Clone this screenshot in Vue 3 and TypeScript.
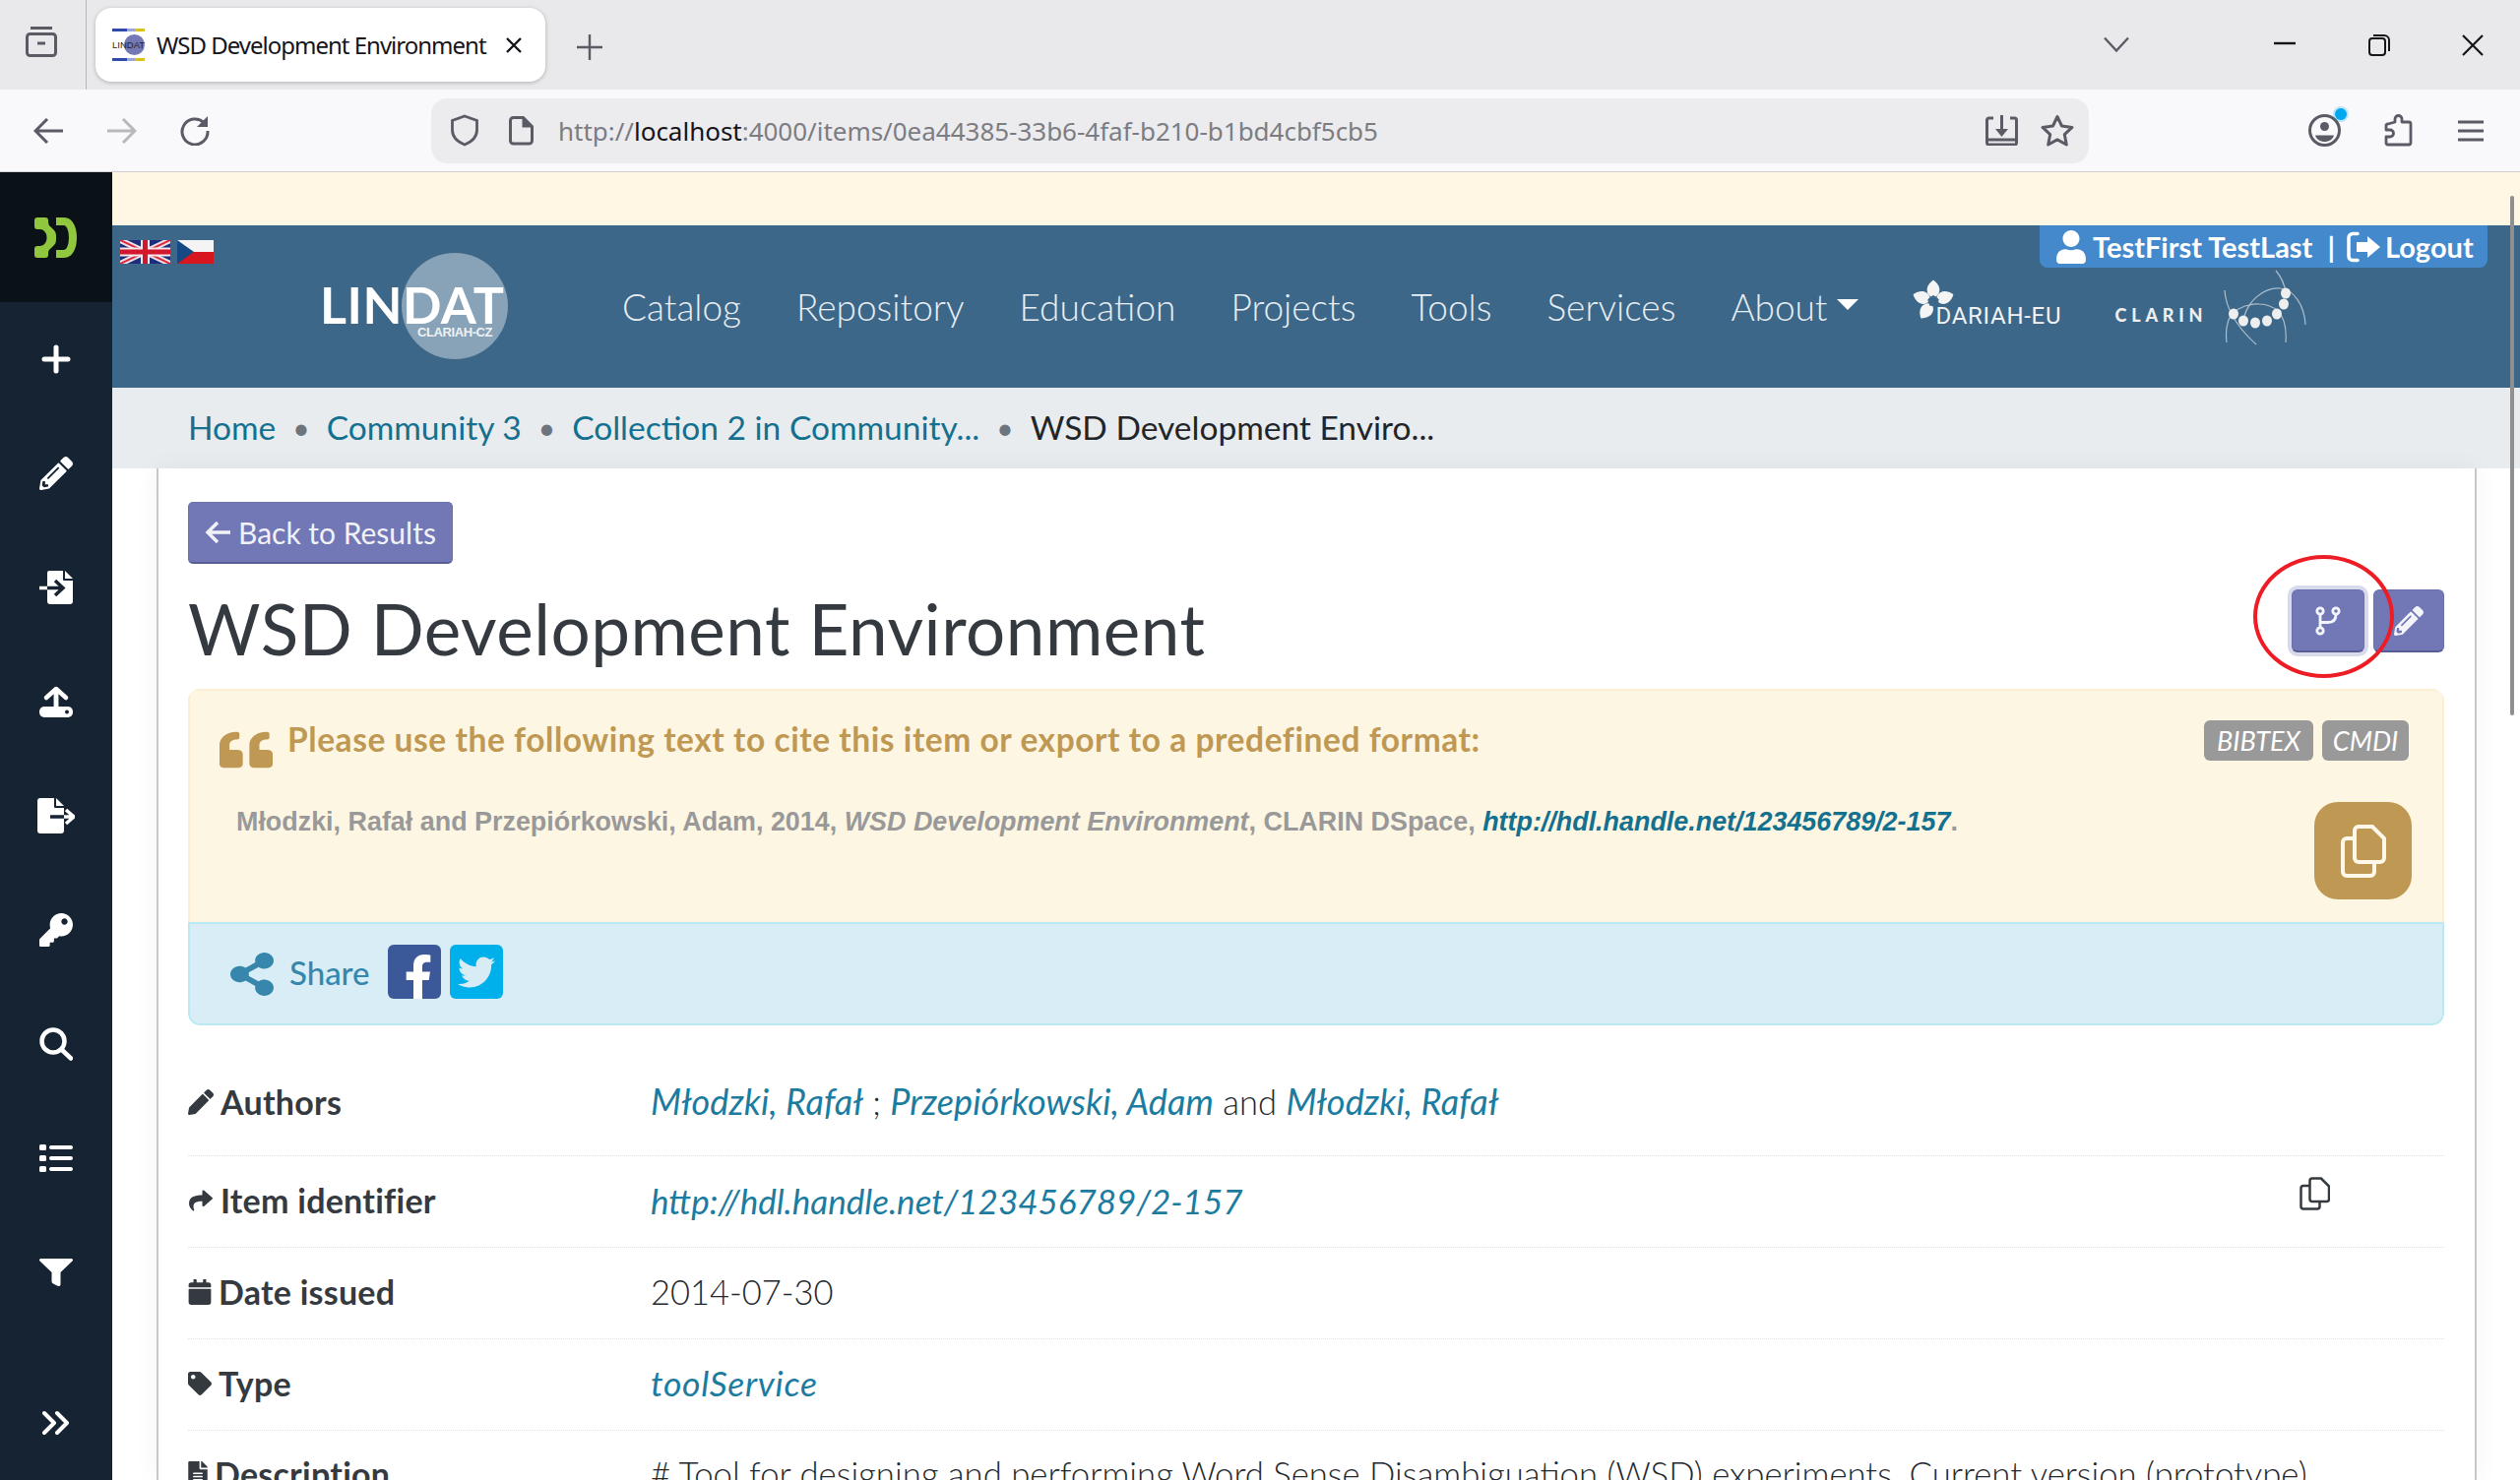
<script setup lang="ts">
interface NavItem { label: string; caret?: boolean }
const nav: NavItem[] = [
  { label: 'Catalog' }, { label: 'Repository' }, { label: 'Education' }, { label: 'Projects' },
  { label: 'Tools' }, { label: 'Services' }, { label: 'About', caret: true },
]
const clarinDots: [number, number][] = [[15, 47], [25, 54], [37, 56], [49, 54], [59, 47], [66, 37], [68, 26]]
const petals: number[] = [0, -72, 72, -144]
</script>

<template>
  <div class="page">
    <div class="tabbar">
      <div class="tab-left">
        <svg class="ic" width="34" height="34" viewBox="0 0 34 34" fill="none" stroke="#5b5b66" stroke-width="3"><path d="M6 3.500h22"/><rect x="2.500" y="9.500" width="29" height="22" rx="3"/><path d="M13 19h8"/></svg>
      </div>
      <div class="tab">
        <div class="favicon">
          <span class="fav-stripe"></span>
          <span class="fav-mid"><i></i><b>LINDAT</b></span>
          <span class="fav-stripe"></span>
        </div>
        <span class="tab-title">WSD Development Environment</span>
        <svg width="18" height="16" viewBox="0 0 18 16" stroke="#15141a" stroke-width="2.400" fill="none"><path d="M2 1l14 14M16 1L2 15"/></svg>
      </div>
      <svg class="plus" width="26" height="26" viewBox="0 0 26 26" stroke="#5b5b66" stroke-width="2.400"><path d="M13 0v26M0 13h26"/></svg>
      <div class="win">
        <svg class="chev" width="26" height="16" viewBox="0 0 26 16" fill="none" stroke="#5b5b66" stroke-width="2.400"><path d="M1 1.500l12 13 12-13"/></svg>
        <svg class="wmin" width="22" height="4" viewBox="0 0 22 4" stroke="#15141a" stroke-width="2.400"><path d="M0 2h22"/></svg>
        <svg class="wmax" width="22" height="22" viewBox="0 0 22 22" fill="none" stroke="#15141a" stroke-width="2"><rect x="1" y="4" width="16" height="17" rx="3"/><path d="M5 1h11a5 5 0 0 1 5 5v11"/></svg>
        <svg class="wclose" width="22" height="22" viewBox="0 0 22 22" fill="none" stroke="#15141a" stroke-width="2.200"><path d="M1 1l20 20M21 1L1 21"/></svg>
      </div>
    </div>

    <div class="toolbar">
      <svg class="t-back" width="30" height="26" viewBox="0 0 30 26" fill="none" stroke="#5b5b66" stroke-width="3"><path d="M30 13H3M14 1L2 13l12 12"/></svg>
      <svg class="t-fwd" width="30" height="26" viewBox="0 0 30 26" fill="none" stroke="#b8b8bd" stroke-width="3"><path d="M0 13h27M16 1l12 12-12 12"/></svg>
      <svg class="t-reload" width="30" height="30" viewBox="0 0 30 30" fill="none" stroke="#5b5b66" stroke-width="3"><path d="M24 6.500A13 13 0 1 0 28 15"/><path d="M28 0v11H17z" fill="#5b5b66" stroke="none"/></svg>
      <div class="urlbar">
        <svg class="u-shield" width="30" height="33" viewBox="0 0 30 33" fill="none" stroke="#5b5b66" stroke-width="2.800"><path d="M15 2l12.500 4.500V16c0 7-5 12-12.500 15C7.500 28 2.500 23 2.500 16V6.500z"/></svg>
        <svg class="u-page" width="25" height="30" viewBox="0 0 25 30" fill="none" stroke="#5b5b66" stroke-width="3"><path d="M4.500 1.500h10l9 9V25a3 3 0 0 1-3 3H4.500a3 3 0 0 1-3-3V4.500a3 3 0 0 1 3-3z"/><path d="M15 2v8h8" fill="#5b5b66"/></svg>
        <span class="url">http://<b>localhost</b>:4000/items/0ea44385-33b6-4faf-b210-b1bd4cbf5cb5</span>
        <svg class="u-save" width="33" height="31" viewBox="0 0 33 31" fill="none" stroke="#5b5b66" stroke-width="3"><path d="M8 3H3.500A2 2 0 0 0 1.500 5v23a2 2 0 0 0 2 2h26a2 2 0 0 0 2-2V5a2 2 0 0 0-2-2H25"/><path d="M16.500 0v17"/><path d="M10 14h13l-6.500 8z" fill="#5b5b66" stroke="none"/><path d="M2 25h29"/></svg>
        <svg class="u-star" width="34" height="33" viewBox="0 0 34 33" fill="none" stroke="#5b5b66" stroke-width="3" stroke-linejoin="round"><path d="M17 2.500l4.500 9.500 10.500 1.400-7.700 7.200 2 10.400L17 25.900 7.700 31l2-10.400L2 13.400 12.500 12z"/></svg>
      </div>
      <div class="profile">
        <svg width="33" height="33" viewBox="0 0 33 33" fill="none"><circle cx="16.500" cy="16.500" r="15" stroke="#5b5b66" stroke-width="3"/><circle cx="16.500" cy="12.500" r="4.500" fill="#5b5b66"/><path d="M7 21.500h19c-1 4-5 6.500-9.500 6.500S8 25.500 7 21.500z" fill="#5b5b66"/></svg>
        <i class="dot"></i>
      </div>
      <svg class="t-ext" width="29" height="33" viewBox="0 0 29 33" fill="none" stroke="#5b5b66" stroke-width="2.800" stroke-linejoin="round"><path d="M11 8V5a3.500 3.500 0 0 1 7 0v3h7a2 2 0 0 1 2 2v19a2 2 0 0 1-2 2H4a2 2 0 0 1-2-2v-6h4a3.500 3.500 0 0 0 0-7H2v-5a2 2 0 0 1 2-1z"/></svg>
      <svg class="t-menu" width="26" height="22" viewBox="0 0 26 22" stroke="#5b5b66" stroke-width="2.800"><path d="M0 2h26M0 11h26M0 20h26"/></svg>
    </div>

    <div class="content">
      <aside class="sidebar">
        <div class="side-logo">
          <svg width="44" height="41" viewBox="0 0 44 41"><path fill="#91c73e" d="M3 0H11Q14 0 14 3V5Q14 8 17 10L20 13Q22 15 22 18V23Q22 26 20 28L17 31Q14 33 14 36V38Q14 41 11 41H3Q0 41 0 38V32Q0 29 3 29H6Q9 29 11 26L12 24Q13 20.500 12 17L11 15Q9 12 6 12H3Q0 12 0 9V3Q0 0 3 0z"/><path d="M22 4h8c6 0 9 8 9 16.500s-3 16.500-9 16.500h-8" fill="none" stroke="#91c73e" stroke-width="8"/></svg>
        </div>
        <div class="side-item"><svg width="34" height="34" viewBox="0 0 34 34" stroke="#fff" stroke-width="5" stroke-linecap="round"><path d="M17 5v24M5 17h24"/></svg></div>
        <div class="side-item"><svg width="34" height="34" viewBox="0 0 512 512" fill="#fff"><path d="M497.900 142.100l-46.100 46.100c-4.700 4.700-12.300 4.700-17 0l-111-111c-4.700-4.700-4.700-12.300 0-17l46.100-46.100c18.700-18.700 49.100-18.700 67.900 0l60.100 60.100c18.800 18.700 18.800 49.100 0 67.900zM284.200 99.800L21.600 362.400.4 483.900c-2.900 16.400 11.400 30.600 27.800 27.800l121.500-21.300 262.600-262.600c4.700-4.700 4.700-12.300 0-17l-111-111c-4.800-4.700-12.400-4.700-17.100 0zM124.100 339.900c-5.500-5.500-5.500-14.300 0-19.800l154-154c5.500-5.500 14.300-5.500 19.800 0s5.500 14.300 0 19.800l-154 154c-5.500 5.500-14.300 5.500-19.800 0zM88 424h48v36.300l-64.500 11.300-31.100-31.100L51.700 376H88v48z"/></svg></div>
        <div class="side-item"><svg width="34" height="34" viewBox="0 0 34 34"><path d="M8 2a2 2 0 0 1 2-2h14v9a1 1 0 0 0 1 1h9v21a3 3 0 0 1-3 3H11a3 3 0 0 1-3-3z" fill="#fff"/><path d="M26 0l8 8h-8z" fill="#fff"/><path d="M8 17.500h15M16 10l8 7.500-8 7.500" fill="none" stroke="#152333" stroke-width="3.500"/><path d="M0 17.500h8" stroke="#fff" stroke-width="3.500"/></svg></div>
        <div class="side-item"><svg width="34" height="34" viewBox="0 0 34 34"><path d="M17 4v19M7 13l10-9 10 9" fill="none" stroke="#fff" stroke-width="4.500" stroke-linecap="round" stroke-linejoin="round"/><rect x="0" y="22" width="34" height="11" rx="5" fill="#fff"/><path d="M17 4v19" stroke="#fff" stroke-width="4.500"/><circle cx="28" cy="27.500" r="2" fill="#152333"/></svg></div>
        <div class="side-item"><svg width="38" height="36" viewBox="0 0 38 36"><path d="M0 3a3 3 0 0 1 3-3h14v9a1 1 0 0 0 1 1h9v23a3 3 0 0 1-3 3H3a3 3 0 0 1-3-3z" fill="#fff"/><path d="M19 0l8 8h-8z" fill="#fff"/><path d="M13 19h14" stroke="#152333" stroke-width="3.500"/><path d="M27 19h8M29 12l8 7-8 7" fill="none" stroke="#fff" stroke-width="3.500"/></svg></div>
        <div class="side-item"><svg width="34" height="34" viewBox="0 0 512 512" fill="#fff"><path d="M512 176.001C512 273.203 433.202 352 336 352c-11.220 0-22.190-1.062-32.827-3.069l-24.012 27.014A23.999 23.999 0 0 1 261.223 384H224v40c0 13.255-10.745 24-24 24h-40v40c0 13.255-10.745 24-24 24H24c-13.255 0-24-10.745-24-24v-78.059c0-6.365 2.529-12.470 7.029-16.971l161.802-161.802C163.108 213.814 160 195.271 160 176 160 78.798 238.797.001 335.999 0 433.488-.001 512 78.511 512 176.001zM336 128c0 26.510 21.490 48 48 48s48-21.490 48-48-21.490-48-48-48-48 21.490-48 48z"/></svg></div>
        <div class="side-item"><svg width="34" height="34" viewBox="0 0 34 34" fill="none" stroke="#fff" stroke-width="4.500" stroke-linecap="round"><circle cx="14" cy="14" r="11.500"/><path d="M23 23l9 8.500"/></svg></div>
        <div class="side-item"><svg width="34" height="28" viewBox="0 0 34 28" fill="#fff"><rect x="0" y="0" width="7" height="6" rx="1.500"/><rect x="0" y="11" width="7" height="6" rx="1.500"/><rect x="0" y="22" width="7" height="6" rx="1.500"/><rect x="10" y="1" width="24" height="4" rx="2"/><rect x="10" y="12" width="24" height="4" rx="2"/><rect x="10" y="23" width="24" height="4" rx="2"/></svg></div>
        <div class="side-item"><svg width="34" height="28" viewBox="0 0 34 28" fill="#fff"><path d="M2 0h30c2 0 2.500 1.500 1.500 2.500L21.500 14v12c0 2-1.500 2.500-3 1.800l-4-2c-1.200-.6-2-1.500-2-2.800v-9L.5 2.500C-.5 1.500 0 0 2 0z"/></svg></div>
        <div class="side-item side-last"><svg width="28" height="26" viewBox="0 0 28 26" fill="none" stroke="#fff" stroke-width="4" stroke-linecap="round" stroke-linejoin="round"><path d="M2 3l10 10L2 23M15 3l10 10-10 10"/></svg></div>
      </aside>

      <main class="main">
        <div class="notice"></div>

        <header class="header">
          <div class="flags">
            <svg width="51" height="24" viewBox="0 0 51 24">
              <rect width="51" height="24" fill="#1b2f7c"/>
              <path d="M0 0l51 24M51 0L0 24" stroke="#f2dfe2" stroke-width="6"/>
              <path d="M0 0l51 24M51 0L0 24" stroke="#d4263c" stroke-width="2"/>
              <path d="M25.500 0v24M0 12h51" stroke="#f5e6e8" stroke-width="9"/>
              <path d="M25.500 0v24M0 12h51" stroke="#d3182e" stroke-width="5"/>
            </svg>
            <svg width="37" height="24" viewBox="0 0 37 24">
              <rect width="37" height="12" fill="#f4f4f4"/>
              <rect y="12" width="37" height="12" fill="#d8161f"/>
              <path d="M0 0l17 12L0 24z" fill="#154a85"/>
            </svg>
          </div>
          <div class="logo">
            <i class="logo-circle"></i>
            <span class="logo-text">LINDAT</span>
            <span class="logo-sub">CLARIAH-CZ</span>
          </div>
          <nav class="nav">
            <a v-for="n in nav" :key="n.label" class="nav-item">{{ n.label }}<i v-if="n.caret" class="caret"></i></a>
          </nav>
          <div class="dariah">
            <svg width="42" height="42" viewBox="0 0 42 42" fill="#f4f4f4">
              <path v-for="r in petals" :key="r" d="M0-21.500C8-16 8-8 2.500-4.500L0-6-2.500-4.500C-8-8-8-16 0-21.500z" :transform="`translate(21 22) rotate(${r})`"/>
            </svg>
            <span class="dariah-text">DARIAH-EU</span>
          </div>
          <div class="clarin">
            <span class="clarin-text">CLARIN</span>
            <svg width="92" height="80" viewBox="0 0 92 80" fill="none">
              <g stroke="#c9d4dd" stroke-width="1.200" opacity=".8">
                <path d="M25 54C28 34 46 20 62 21c14 1 25 17 26 37"/>
                <path d="M8 76C6 60 10 46 20 42c12-7 30-7 40 2 7 7 9 18 8 32"/>
                <path d="M6 23c1 17 10 35 32 55"/>
                <path d="M58 3c5 6 9 14 10 23"/>
              </g>
              <ellipse v-for="(d, i) in clarinDots" :key="i" :cx="d[0]" :cy="d[1]" rx="5" ry="5.500" fill="#eeeeee"/>
            </svg>
          </div>
          <div class="userbox">
            <svg width="30" height="34" viewBox="0 0 448 512" fill="#fff"><path d="M224 256c70.700 0 128-57.300 128-128S294.700 0 224 0 96 57.300 96 128s57.300 128 128 128zm89.600 32h-16.700c-22.200 10.200-46.900 16-72.900 16s-50.600-5.800-72.900-16h-16.700C60.200 288 0 348.200 0 422.400V464c0 26.500 21.500 48 48 48h352c26.500 0 48-21.500 48-48v-41.600c0-74.200-60.200-134.400-134.400-134.400z"/></svg>
            <span class="user-name">TestFirst TestLast</span>
            <span class="user-sep">|</span>
            <svg width="35" height="32" viewBox="0 0 35 32" fill="none"><path d="M11 2.500H6a4 4 0 0 0-4 4v19a4 4 0 0 0 4 4h5" stroke="#fff" stroke-width="3.500" stroke-linecap="round"/><path d="M21 5l13 11-13 11v-6H10v-10h11z" fill="#fff"/></svg>
            <span class="user-out">Logout</span>
          </div>
        </header>

        <div class="crumbs">
          <a class="c-link">Home</a><span class="c-dot">•</span>
          <a class="c-link">Community 3</a><span class="c-dot">•</span>
          <a class="c-link">Collection 2 in Community...</a><span class="c-dot">•</span>
          <span class="c-active">WSD Development Enviro...</span>
        </div>

        <section class="card">
          <button class="back">
            <svg width="26" height="24" viewBox="0 0 26 24" fill="none" stroke="#f1f1f8" stroke-width="3.500"><path d="M26 12H4M13 2L3 12l10 10"/></svg>
            Back to Results
          </button>

          <div class="title-row">
            <h1 class="title">WSD Development Environment</h1>
            <div class="actions">
              <button class="act act-focus">
                <svg width="28" height="30" viewBox="0 0 28 30" fill="none" stroke="#f4f4fb" stroke-width="2.800"><circle cx="6" cy="5" r="3.200"/><circle cx="22" cy="5" r="3.200"/><circle cx="6" cy="25" r="3.200"/><path d="M6 8.500v13M22 8.500c0 6-3 8-8 8H6"/></svg>
              </button>
              <button class="act">
                <svg width="30" height="30" viewBox="0 0 512 512" fill="#f4f4fb"><path d="M497.900 142.100l-46.100 46.100c-4.700 4.700-12.300 4.700-17 0l-111-111c-4.700-4.700-4.700-12.300 0-17l46.100-46.100c18.700-18.700 49.100-18.700 67.900 0l60.100 60.100c18.800 18.700 18.800 49.100 0 67.900zM284.200 99.800L21.600 362.400.4 483.900c-2.900 16.400 11.400 30.600 27.800 27.800l121.500-21.300 262.600-262.600c4.700-4.700 4.700-12.300 0-17l-111-111c-4.800-4.700-12.400-4.700-17.100 0zM124.100 339.900c-5.500-5.500-5.500-14.300 0-19.800l154-154c5.500-5.500 14.300-5.500 19.800 0s5.500 14.300 0 19.800l-154 154c-5.500 5.500-14.300 5.500-19.800 0zM88 424h48v36.300l-64.500 11.300-31.100-31.100L51.700 376H88v48z"/></svg>
              </button>
            </div>
          </div>

          <div class="cite">
            <div class="cite-main">
              <div class="cite-top">
                <svg class="quote" width="54" height="38" viewBox="0 24 512 464" preserveAspectRatio="none" fill="#bf9853"><path d="M464 256h-80v-64c0-35.300 28.700-64 64-64h8c13.300 0 24-10.700 24-24V56c0-13.300-10.700-24-24-24h-8c-88.400 0-160 71.600-160 160v240c0 26.500 21.500 48 48 48h128c26.500 0 48-21.500 48-48V304c0-26.500-21.500-48-48-48zm-288 0H96v-64c0-35.300 28.700-64 64-64h8c13.300 0 24-10.700 24-24V56c0-13.300-10.700-24-24-24h-8C71.600 32 0 103.600 0 192v240c0 26.500 21.500 48 48 48h128c26.500 0 48-21.500 48-48V304c0-26.500-21.500-48-48-48z"/></svg>
                <span class="cite-head">Please use the following text to cite this item or export to a predefined format:</span>
                <span class="badge b1">BIBTEX</span>
                <span class="badge b2">CMDI</span>
              </div>
              <div class="cite-body">
                <p class="cite-text">Młodzki, Rafał and Przepiórkowski, Adam, 2014, <em>WSD Development Environment</em>, CLARIN DSpace, <a><em>http://hdl.handle.net/123456789/2-157</em></a>.</p>
                <button class="copy-big">
                  <svg width="46" height="54" viewBox="0 0 46 54" fill="none" stroke="#fff8ea" stroke-width="4"><path d="M18 2h14l12 12v20a4 4 0 0 1-4 4H18a4 4 0 0 1-4-4V6a4 4 0 0 1 4-4z"/><path d="M14 14H6a4 4 0 0 0-4 4v30a4 4 0 0 0 4 4h24a4 4 0 0 0 4-4v-10"/></svg>
                </button>
              </div>
            </div>
            <div class="share">
              <svg width="44" height="44" viewBox="0 0 448 512" preserveAspectRatio="none" fill="#3787ad"><path d="M352 320c-22.608 0-43.387 7.819-59.790 20.895l-102.486-64.054a96.551 96.551 0 0 0 0-41.683l102.486-64.054C308.613 184.181 329.392 192 352 192c53.019 0 96-42.981 96-96S405.019 0 352 0s-96 42.981-96 96c0 7.158.79 14.130 2.276 20.841L155.790 180.895C139.387 167.819 118.608 160 96 160c-53.019 0-96 42.981-96 96s42.981 96 96 96c22.608 0 43.387-7.819 59.790-20.895l102.486 64.054A96.301 96.301 0 0 0 256 416c0 53.019 42.981 96 96 96s96-42.981 96-96-42.981-96-96-96z"/></svg>
              <span class="share-text">Share</span>
              <span class="social fb"><svg width="34" height="46" viewBox="0 0 320 512" fill="#fff"><path d="M279.140 288l14.220-92.660h-88.910v-60.130c0-25.350 12.420-50.060 52.240-50.060h40.420V6.260S260.430 0 225.360 0c-73.220 0-121.080 44.380-121.080 124.720v70.620H22.890V288h81.390v224h100.170V288z"/></svg></span>
              <span class="social tw"><svg width="38" height="38" viewBox="0 0 512 512" fill="#d8ecf6"><path d="M459.370 151.716c.325 4.548.325 9.097.325 13.645 0 138.720-105.583 298.558-298.558 298.558-59.452 0-114.680-17.219-161.137-47.106 8.447.974 16.568 1.299 25.340 1.299 49.055 0 94.213-16.568 130.274-44.832-46.132-.975-84.792-31.188-98.112-72.772 6.498.974 12.995 1.624 19.818 1.624 9.421 0 18.843-1.300 27.614-3.573-48.081-9.747-84.143-51.980-84.143-102.985v-1.299c13.969 7.797 30.214 12.670 47.431 13.319-28.264-18.843-46.781-51.005-46.781-87.391 0-19.492 5.197-37.360 14.294-52.954 51.655 63.675 129.300 105.258 216.365 109.807-1.624-7.797-2.599-15.918-2.599-24.040 0-57.828 46.782-104.934 104.934-104.934 30.213 0 57.502 12.670 76.670 33.137 23.715-4.548 46.456-13.320 66.599-25.340-7.798 24.366-24.366 44.833-46.132 57.827 21.117-2.273 41.584-8.122 60.426-16.243-14.292 20.791-32.161 39.308-52.628 54.253z"/></svg></span>
            </div>
          </div>

          <div class="row row-first">
            <div class="r-label"><svg width="26" height="26" viewBox="0 0 512 512" fill="#343a40"><path d="M497.900 142.100l-46.100 46.100c-4.700 4.700-12.300 4.700-17 0l-111-111c-4.700-4.700-4.700-12.300 0-17l46.100-46.100c18.700-18.700 49.100-18.700 67.900 0l60.100 60.100c18.800 18.700 18.800 49.100 0 67.900zM284.200 99.800L21.600 362.400.4 483.900c-2.900 16.400 11.400 30.600 27.800 27.800l121.500-21.300 262.600-262.600c4.700-4.700 4.700-12.300 0-17l-111-111c-4.800-4.700-12.400-4.700-17.100 0z"/></svg>Authors</div>
            <div class="r-value"><a class="a-author">Młodzki, Rafał</a> ; <a class="a-author">Przepiórkowski, Adam</a> and <a class="a-author">Młodzki, Rafał</a></div>
          </div>
          <div class="row">
            <div class="r-label"><svg width="26" height="24" viewBox="0 0 512 512" fill="#343a40"><path d="M503.691 189.836L327.687 37.851C312.281 24.546 288 35.347 288 56.015v80.053C127.371 137.907 0 170.100 0 322.326c0 61.441 39.581 122.309 83.333 154.132 13.653 9.931 33.111-2.533 28.077-18.631C66.066 312.814 132.917 274.316 288 272.085V360c0 20.700 24.300 31.453 39.687 18.164l176.004-152c11.071-9.562 11.086-26.753 0-36.328z"/></svg>Item identifier</div>
            <div class="r-value"><a class="a-url">http://hdl.handle.net/123456789/2-157</a></div>
            <svg class="copy-small" width="31" height="34" viewBox="0 0 31 34" fill="none" stroke="#343a40" stroke-width="2.500"><path d="M13 1.500h9l8 8v13a2.500 2.500 0 0 1-2.500 2.500H13a2.500 2.500 0 0 1-2.500-2.500V4A2.500 2.500 0 0 1 13 1.500z"/><path d="M10 9H4a2.500 2.500 0 0 0-2.500 2.500V30A2.500 2.500 0 0 0 4 32.500h14a2.500 2.500 0 0 0 2.500-2.500v-5"/></svg>
          </div>
          <div class="row">
            <div class="r-label"><svg width="24" height="26" viewBox="0 0 448 512" fill="#343a40"><path d="M12 192h424c6.600 0 12 5.400 12 12v260c0 26.500-21.500 48-48 48H48c-26.500 0-48-21.500-48-48V204c0-6.600 5.400-12 12-12zm436-44v-36c0-26.500-21.500-48-48-48h-48V12c0-6.600-5.400-12-12-12h-40c-6.600 0-12 5.400-12 12v52H160V12c0-6.600-5.400-12-12-12h-40c-6.600 0-12 5.400-12 12v52H48C21.500 64 0 85.500 0 112v36c0 6.600 5.400 12 12 12h424c6.600 0 12-5.400 12-12z"/></svg>Date issued</div>
            <div class="r-value">2014-07-30</div>
          </div>
          <div class="row">
            <div class="r-label"><svg width="24" height="24" viewBox="0 0 512 512" fill="#343a40"><path d="M0 252.118V48C0 21.490 21.490 0 48 0h204.118a48 48 0 0 1 33.941 14.059l211.882 211.882c18.745 18.745 18.745 49.137 0 67.882L293.823 497.941c-18.745 18.745-49.137 18.745-67.882 0L14.059 286.059A48 48 0 0 1 0 252.118zM112 64c-26.510 0-48 21.490-48 48s21.490 48 48 48 48-21.490 48-48-21.490-48-48-48z"/></svg>Type</div>
            <div class="r-value"><a class="a-type">toolService</a></div>
          </div>
          <div class="row row-last">
            <div class="r-label"><svg width="20" height="26" viewBox="0 0 384 512" fill="#343a40"><path d="M224 136V0H24C10.700 0 0 10.700 0 24v464c0 13.300 10.700 24 24 24h336c13.300 0 24-10.700 24-24V160H248c-13.200 0-24-10.800-24-24zm64 236c0 6.600-5.400 12-12 12H108c-6.600 0-12-5.400-12-12v-8c0-6.600 5.400-12 12-12h168c6.600 0 12 5.400 12 12v8zm0-64c0 6.600-5.400 12-12 12H108c-6.600 0-12-5.400-12-12v-8c0-6.600 5.400-12 12-12h168c6.600 0 12 5.400 12 12v8zm0-72v8c0 6.600-5.400 12-12 12H108c-6.600 0-12-5.400-12-12v-8c0-6.600 5.400-12 12-12h168c6.600 0 12 5.400 12 12zm96-114.100v6.100H256V0h6.100c6.400 0 12.500 2.500 17 7l97.900 98c4.500 4.500 7 10.600 7 16.900z"/></svg>Description</div>
            <div class="r-value r-desc"># Tool for designing and performing Word Sense Disambiguation (WSD) experiments. Current version (prototype)</div>
          </div>
        </section>
      </main>
    </div>

    <i class="annotation"></i>
    <i class="scroll-thumb"></i>
  </div>
</template>

<style>
html, body { margin: 0; padding: 0; overflow: hidden; background: #fff; }
</style>

<style scoped>
.page { position: relative; width: 2560px; height: 1504px; overflow: hidden; display: flex; flex-direction: column; font-family: "Lato", "Noto Sans", sans-serif; color: #343a40; background: #fff; }

.tabbar { height: 91px; flex: none; display: flex; align-items: flex-start; background: #e9e9eb; }
.tab-left { width: 87px; height: 91px; border-right: 1px solid #b6b6ba; display: flex; align-items: center; justify-content: center; box-sizing: content-box; }
.tab-left .ic { margin-top: -7px; margin-left: -4px; }
.tab { margin: 8px 0 0 9px; width: 457px; height: 75px; box-sizing: border-box; padding: 0 22px 0 17px; display: flex; align-items: center; background: #fff; border-radius: 16px; box-shadow: 0 1px 4px rgba(0,0,0,.25); }
.favicon { width: 33px; height: 33px; display: flex; flex-direction: column; justify-content: space-between; flex: none; }
.fav-stripe { height: 3px; background: linear-gradient(90deg, #2f4aa8 0 45%, #9aa6dd 45% 70%, #d9c21a 70%); }
.fav-mid { position: relative; height: 21px; display: flex; align-items: center; }
.fav-mid i { position: absolute; right: 0; top: 0; width: 21px; height: 21px; border-radius: 50%; background: #7478b5; }
.fav-mid b { position: relative; font: 400 9.500px "Liberation Sans", sans-serif; color: #222; }
.tab-title { margin: 0 18px 0 12px; flex: none; width: 336px; white-space: nowrap; font: 400 24px "Noto Sans", sans-serif; letter-spacing: -1px; color: #15141a; }
.plus { margin: 35px 0 0 32px; flex: none; }
.win { flex: 1; height: 91px; display: flex; align-items: flex-start; }
.chev { margin: 37px 0 0 1525px; }
.wmin { margin: 42px 0 0 147px; }
.wmax { margin: 35px 0 0 74px; }
.wclose { margin: 35px 0 0 73px; }

.toolbar { height: 83px; flex: none; box-sizing: content-box; border-bottom: 1px solid #cfcfd4; display: flex; align-items: center; background: #f9f9fb; }
.t-back { margin-left: 34px; }
.t-fwd { margin-left: 45px; }
.t-reload { margin-left: 44px; }
.urlbar { margin-left: 225px; width: 1684px; height: 66px; box-sizing: border-box; background: #ececee; border-radius: 16px; display: flex; align-items: center; padding-left: 19px; }
.u-page { margin-left: 30px; }
.url { margin-left: 25px; width: 1450px; white-space: nowrap; font: 400 26px "Noto Sans", sans-serif; letter-spacing: -.02px; color: #7c7c83; }
.url b { font-weight: 400; color: #15141a; }
.u-star { margin-left: 23px; }
.profile { position: relative; margin-left: 223px; height: 33px; }
.dot { position: absolute; right: -6px; top: -6px; width: 12px; height: 12px; border-radius: 50%; background: #00a8f0; box-shadow: 0 0 0 2px rgba(0,168,240,.25); }
.t-ext { margin-left: 44px; }
.t-menu { margin-left: 46px; }

.content { flex: 1; display: flex; min-height: 0; }
.sidebar { width: 114px; flex: none; background: #152333; display: flex; flex-direction: column; align-items: stretch; }
.side-logo { height: 132px; background: #0a1218; display: flex; align-items: center; justify-content: center; }
.side-item { height: 116px; flex: none; display: flex; align-items: center; justify-content: center; }
.side-last { margin-top: 37px; }

.main { flex: 1; display: flex; flex-direction: column; min-width: 0; }
.notice { height: 54px; flex: none; background: #fff7e3; }

.header { position: relative; height: 165px; flex: none; background: #3c6788; display: flex; align-items: flex-start; color: #e8eef3; }
.flags { display: flex; gap: 7px; margin: 15px 0 0 8px; flex: none; }
.logo { position: relative; margin: 63px 0 0 108px; width: 185px; height: 37px; flex: none; }
.logo-circle { position: absolute; left: 83px; top: -35px; width: 108px; height: 108px; border-radius: 50%; background: #88a2b7; }
.logo-text { position: absolute; left: 0; top: -2px; font: 700 52px/38px "Lato", sans-serif; color: #fff; letter-spacing: .5px; }
.logo-sub { position: absolute; left: 99px; top: 38px; font: 700 13px/16px "Liberation Sans", sans-serif; color: #eef2f5; letter-spacing: -.4px; }
.nav { display: flex; gap: 56px; margin: 61px 0 0 122px; font: 300 37px/44px "Lato", sans-serif; flex: none; }
.nav-item { white-space: nowrap; display: flex; align-items: center; }
.caret { margin-left: 9px; margin-top: -6px; width: 0; height: 0; border-left: 11px solid transparent; border-right: 11px solid transparent; border-top: 11px solid #fff; }
.dariah { position: relative; margin: 55px 0 0 55px; width: 151px; height: 45px; flex: none; }
.dariah-text { position: absolute; left: 24px; top: 25px; font: 400 24px/24px "Roboto", sans-serif; letter-spacing: .7px; color: #f2f2f2; white-space: nowrap; }
.clarin { display: flex; align-items: flex-start; margin: 43px 0 0 55px; flex: none; }
.clarin-text { width: 105px; flex: none; margin-top: 36px; font: 900 18px/24px "Lato", sans-serif; letter-spacing: 4.800px; color: #eeeeee; }
.userbox { position: absolute; right: 33px; top: 0; width: 455px; height: 43px; box-sizing: border-box; padding-left: 17px; display: flex; align-items: center; background: #4389cb; border-radius: 0 0 8px 8px; color: #fff; font: 700 29px "Lato", sans-serif; }
.user-name { margin-left: 7px; }
.user-sep { margin-left: 15px; }
.userbox svg:nth-of-type(2) { margin-left: 12px; }
.user-out { margin-left: 4px; }

.crumbs { height: 82px; flex: none; box-sizing: border-box; padding: 0 0 3px 77px; background: #e9ecef; display: flex; align-items: center; font: 400 33.500px "Lato", sans-serif; }
.c-link { color: #14708f; white-space: nowrap; }
.c-dot { margin: 0 17px; color: #6c757d; font-size: 30px; }
.c-active { color: #212529; white-space: nowrap; }

.card { flex: 1; min-height: 0; margin: 0 44px 0 45px; padding: 34px 31px 0 30px; border: solid #c8c8c8; border-width: 0 2px; background: #fff; box-shadow: 0 0 24px rgba(0,0,0,.05); overflow: hidden; }
.back { display: flex; align-items: center; gap: 8px; width: 269px; height: 63px; box-sizing: border-box; padding: 0 0 0 16px; background: #7178b5; color: #f1f1f8; border: 1px solid #6a70ad; border-bottom: 2px solid #565d96; border-radius: 5px; font: 400 30px "Lato", sans-serif; }
.title-row { height: 127px; display: flex; justify-content: space-between; align-items: flex-start; }
.title { margin: 0; font: 400 71px/132px "Lato", sans-serif; letter-spacing: .5px; color: #343a40; white-space: nowrap; }
.actions { display: flex; gap: 9px; margin-top: 26px; }
.act { width: 74px; height: 64px; padding: 0; display: flex; align-items: center; justify-content: center; background: #7178b5; border: 1px solid #6a70ad; border-bottom: 2px solid #565d96; border-radius: 6px; }
.act + .act { width: 72px; }
.act-focus { box-shadow: 0 0 0 4px #d8d9ea; }

.cite { border-radius: 12px; overflow: hidden; }
.cite-main { height: 237px; box-sizing: border-box; background: #fdf6e3; border: 2px solid #fbeed5; border-bottom: 0; padding: 30px 34px 0 30px; }
.cite-top { display: flex; align-items: flex-start; height: 49px; }
.quote { margin-top: 11px; flex: none; }
.cite-head { margin: -2px 0 0 15px; flex: 1; font: 700 33.500px/42px "Lato", sans-serif; letter-spacing: .56px; color: #bf9853; white-space: nowrap; }
.badge { height: 41px; box-sizing: border-box; display: flex; align-items: center; justify-content: center; background: #999; color: #fff; border-radius: 6px; font: italic 400 27px "Lato", sans-serif; }
.b1 { width: 111px; margin-left: -1px; }
.b2 { width: 88px; margin-left: 9px; }
.cite-body { margin-top: 35px; display: flex; justify-content: space-between; align-items: flex-start; }
.cite-text { margin: 0 0 0 17px; font: 700 26.900px/38px "Liberation Sans", sans-serif; color: #999; white-space: nowrap; }
.cite-text a { color: #14708f; }
.copy-big { margin: -1px -3px 0 0; width: 99px; height: 99px; padding: 0; display: flex; align-items: center; justify-content: center; background: #bf9853; border: 0; border-radius: 24px; }
.share { height: 105px; box-sizing: border-box; background: #d9edf7; border: 2px solid #bce8f1; border-radius: 0 0 12px 12px; padding-left: 41px; display: flex; align-items: center; }
.share-text { margin: -4px 0 0 16px; width: 100px; font: 500 33px "Lato", sans-serif; color: #3787ad; }
.social { width: 54px; height: 55px; border-radius: 6px; display: flex; align-items: flex-end; justify-content: center; overflow: hidden; margin-top: -4px; }
.fb { background: #3b5998; }
.fb svg { margin-left: 8px; margin-bottom: -1px; }
.tw { background: #00b0ea; margin-left: 9px; align-items: center; }

.row { height: 93px; box-sizing: border-box; display: flex; align-items: center; padding-bottom: 2px; border-bottom: 1px dotted #e4e4e4; }
.row-first { margin-top: 36px; height: 97px; padding-bottom: 13px; }
.row-last { border-bottom: 0; height: 80px; align-items: flex-start; padding-top: 24px; }
.r-label { width: 470px; flex: none; display: flex; align-items: center; gap: 7px; font: 700 34px/40px "Lato", sans-serif; letter-spacing: .25px; color: #343a40; white-space: nowrap; }
.r-value { font: 300 34.500px/40px "Lato", sans-serif; color: #23282d; white-space: nowrap; }
.r-value a { color: #1c7c9f; font-style: italic; font-weight: 400; font-size: 35.500px; }
.r-value .a-author { font-size: 36px; letter-spacing: .12px; }
.r-value .a-url { font-size: 35px; }
.r-value .a-type { letter-spacing: .7px; }
.r-desc { font-size: 34.700px; }
.copy-small { margin: -14px 116px 0 auto; }

.annotation { position: absolute; left: 2289px; top: 564px; width: 143px; height: 125px; box-sizing: border-box; border: 4px solid #ee1c25; border-radius: 50%; }
.scroll-thumb { position: absolute; left: 2550px; top: 199px; width: 4px; height: 528px; border-radius: 2px; background: #8f8f8f; }
</style>
